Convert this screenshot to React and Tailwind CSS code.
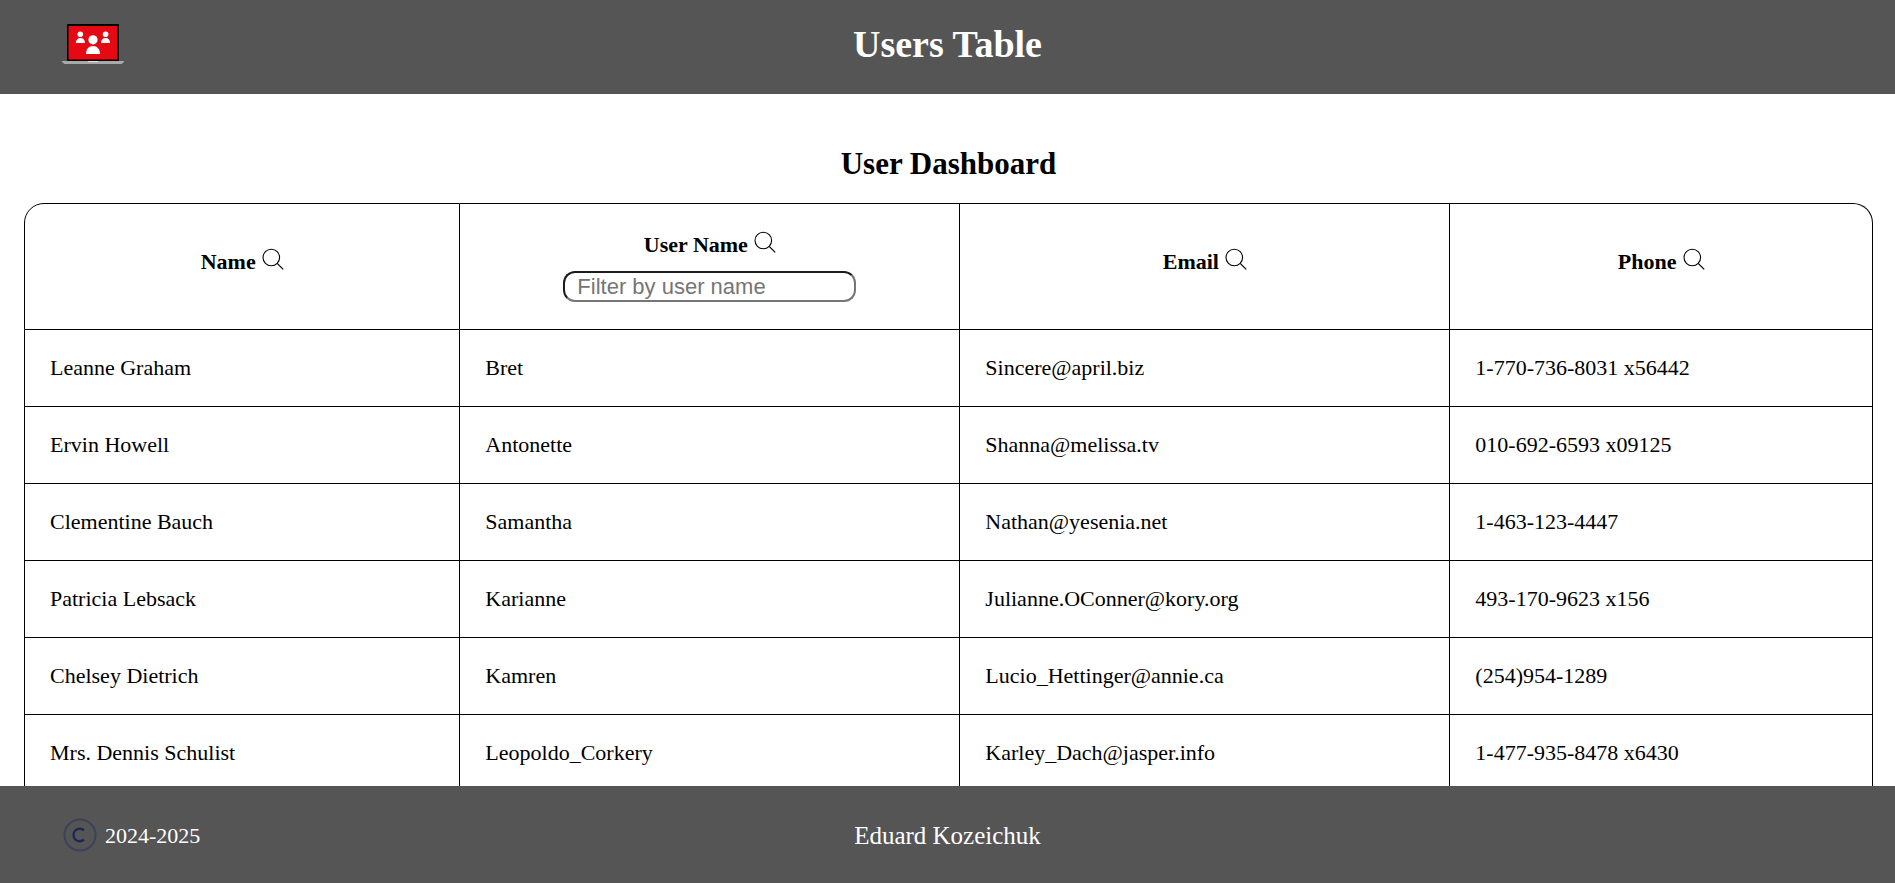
import { useState } from "react";

const columns = [
  { key: "name", label: "Name", width: "w-[23.6%]" },
  { key: "username", label: "User Name", width: "w-[27.04%]" },
  { key: "email", label: "Email", width: "w-[26.5%]" },
  { key: "phone", label: "Phone", width: "w-[22.86%]" },
];

const users = [
  { name: "Leanne Graham", username: "Bret", email: "Sincere@april.biz", phone: "1-770-736-8031 x56442" },
  { name: "Ervin Howell", username: "Antonette", email: "Shanna@melissa.tv", phone: "010-692-6593 x09125" },
  { name: "Clementine Bauch", username: "Samantha", email: "Nathan@yesenia.net", phone: "1-463-123-4447" },
  { name: "Patricia Lebsack", username: "Karianne", email: "Julianne.OConner@kory.org", phone: "493-170-9623 x156" },
  { name: "Chelsey Dietrich", username: "Kamren", email: "Lucio_Hettinger@annie.ca", phone: "(254)954-1289" },
  { name: "Mrs. Dennis Schulist", username: "Leopoldo_Corkery", email: "Karley_Dach@jasper.info", phone: "1-477-935-8478 x6430" },
];

function Logo() {
  return (
    <svg viewBox="0 0 62 40" className="h-10 w-[62px]" aria-hidden="true">
      <rect x="5" y="0" width="52" height="37" rx="1" fill="#000" />
      <rect x="6.5" y="2" width="49" height="33.500" fill="#e50914" />
      <g fill="#fff">
        <circle cx="18.3" cy="10.3" r="2.8" />
        <path d="M13.8 19c0-3 1.8-5 4.6-5s4.6 2 4.6 5z" />
        <circle cx="43.6" cy="10.3" r="2.8" />
        <path d="M39 19c0-3 1.8-5 4.6-5s4.5 2 4.5 5z" />
        <circle cx="31" cy="15.8" r="4.6" />
        <path d="M24 30c0-5 2.8-8 7-8s7 3 7 8z" />
      </g>
      <path d="M0 37h62v1l-2.500 2h-57L0 38z" fill="#a9a9a9" />
      <path d="M26 37h10v1H26z" fill="#e6e6e6" />
    </svg>
  );
}

function CopyrightIcon() {
  return (
    <svg viewBox="0 0 34 34" className="size-[34px]" fill="none" aria-hidden="true">
      <circle cx="17" cy="17" r="15.500" stroke="#3c425a" strokeWidth="2" />
      <path d="M21 12.200c-1.300-1-2.600-1.400-4.200-1.400-3.600 0-6.300 2.600-6.300 6.200s2.700 6.200 6.300 6.200c1.600 0 2.900-.4 4.200-1.400" stroke="#1d2756" strokeWidth="2.400" />
    </svg>
  );
}

function SearchIcon() {
  return (
    <svg viewBox="0 0 22 22" className="size-[22px]" fill="none" stroke="#000" aria-hidden="true">
      <circle cx="9.300" cy="9.500" r="8.300" strokeWidth="1.100" />
      <path d="M15.200 15.400l6 6" strokeWidth="1.300" />
    </svg>
  );
}

export default function App() {
  const [open, setOpen] = useState("username");
  const [filter, setFilter] = useState("");
  const active = open || "username";
  const rows = users.filter((u) => u[active].toLowerCase().includes(filter.toLowerCase()));

  return (
    <div className="flex h-screen flex-col bg-white font-['Liberation_Serif',serif] text-[22px] text-black">
      <header className="grid shrink-0 grid-cols-[1fr_auto_1fr] items-center bg-[#555] px-[62px] pt-5 pb-[26px]">
        <Logo />
        <h1 className="text-[38px] leading-[48px] font-bold text-white">Users Table</h1>
      </header>

      <main className="min-h-0 flex-1 overflow-y-auto pt-[50px] pr-[22px] pl-6 [scrollbar-width:none]">
        <h2 className="mb-[19px] text-center text-[31px] leading-10 font-bold">User Dashboard</h2>
        <table className="w-full table-fixed border-separate border-spacing-0">
          <thead>
            <tr>
              {columns.map((col) => (
                <th
                  key={col.key}
                  className={`${col.width} ${open === col.key ? "pb-0" : "pb-4"} h-[127px] border-t border-r border-b border-black px-6 align-middle font-bold first:rounded-tl-[20px] first:border-l last:rounded-tr-[20px]`}
                >
                  <div className="flex items-end justify-center gap-[6px]">
                    <span className="leading-4">{col.label}</span>
                    <button
                      type="button"
                      aria-label={`Search by ${col.label}`}
                      className="cursor-pointer"
                      onClick={() => {
                        setOpen(open === col.key ? "" : col.key);
                        setFilter("");
                      }}
                    >
                      <SearchIcon />
                    </button>
                  </div>
                  {open === col.key && (
                    <input
                      type="text"
                      aria-label={`Filter by ${col.label}`}
                      placeholder={`Filter by ${col.label.toLowerCase()}`}
                      value={filter}
                      onChange={(e) => setFilter(e.target.value)}
                      className="mt-[18px] h-[31px] w-[293px] max-w-full rounded-[12px] border-2 border-t-[#1c1c1c] border-r-[#767676] border-b-[#767676] border-l-[#1c1c1c] px-3 font-['Liberation_Sans',sans-serif] font-normal placeholder:text-[#757575]"
                    />
                  )}
                </th>
              ))}
            </tr>
          </thead>
          <tbody>
            {rows.map((user) => (
              <tr key={user.email}>
                {columns.map((col) => (
                  <td
                    key={col.key}
                    className="border-r border-b border-black px-[25px] py-[25px] leading-[26px] first:border-l"
                  >
                    {user[col.key]}
                  </td>
                ))}
              </tr>
            ))}
          </tbody>
        </table>
      </main>

      <footer className="grid shrink-0 grid-cols-[1fr_auto_1fr] items-center bg-[#555] px-[63px] pt-8 pb-[31px] text-white">
        <div className="flex items-center gap-2">
          <CopyrightIcon />
          <span>2024-2025</span>
        </div>
        <p className="text-[25px] leading-[33px]">Eduard Kozeichuk</p>
      </footer>
    </div>
  );
}
